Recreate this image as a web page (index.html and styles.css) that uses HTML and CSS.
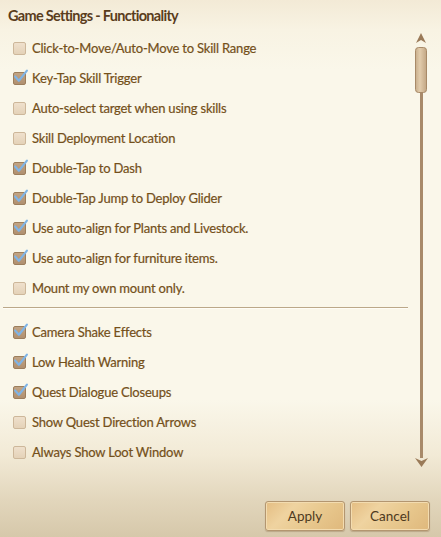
FILE: index.html
```html
<!DOCTYPE html>
<html>
<head>
<meta charset="utf-8">
<link rel="stylesheet" href="styles.css">
</head>
<body>
<div class="window">
  <h1 class="title">Game Settings - Functionality</h1>
  <div class="body">
    <div class="list">
      <div class="row"><span class="box"></span><span class="label">Click-to-Move/Auto-Move to Skill Range</span></div>
      <div class="row"><span class="box on"><svg viewBox="0 0 14 14" class="check"><path d="M2 7 L5.5 11 L13 1.5"/></svg></span><span class="label">Key-Tap Skill Trigger</span></div>
      <div class="row"><span class="box"></span><span class="label">Auto-select target when using skills</span></div>
      <div class="row"><span class="box"></span><span class="label">Skill Deployment Location</span></div>
      <div class="row"><span class="box on"><svg viewBox="0 0 14 14" class="check"><path d="M2 7 L5.5 11 L13 1.5"/></svg></span><span class="label">Double-Tap to Dash</span></div>
      <div class="row"><span class="box on"><svg viewBox="0 0 14 14" class="check"><path d="M2 7 L5.5 11 L13 1.5"/></svg></span><span class="label">Double-Tap Jump to Deploy Glider</span></div>
      <div class="row"><span class="box on"><svg viewBox="0 0 14 14" class="check"><path d="M2 7 L5.5 11 L13 1.5"/></svg></span><span class="label">Use auto-align for Plants and Livestock.</span></div>
      <div class="row"><span class="box on"><svg viewBox="0 0 14 14" class="check"><path d="M2 7 L5.5 11 L13 1.5"/></svg></span><span class="label">Use auto-align for furniture items.</span></div>
      <div class="row"><span class="box"></span><span class="label">Mount my own mount only.</span></div>
      <div class="sep"></div>
      <div class="row"><span class="box on"><svg viewBox="0 0 14 14" class="check"><path d="M2 7 L5.5 11 L13 1.5"/></svg></span><span class="label">Camera Shake Effects</span></div>
      <div class="row"><span class="box on"><svg viewBox="0 0 14 14" class="check"><path d="M2 7 L5.5 11 L13 1.5"/></svg></span><span class="label">Low Health Warning</span></div>
      <div class="row"><span class="box on"><svg viewBox="0 0 14 14" class="check"><path d="M2 7 L5.5 11 L13 1.5"/></svg></span><span class="label">Quest Dialogue Closeups</span></div>
      <div class="row"><span class="box"></span><span class="label">Show Quest Direction Arrows</span></div>
      <div class="row"><span class="box"></span><span class="label">Always Show Loot Window</span></div>
    </div>
    <div class="scrollbar">
      <svg width="20" height="440" viewBox="0 0 20 440">
        <defs>
          <linearGradient id="thumb" x1="0" x2="1" y1="0" y2="0">
            <stop offset="0" stop-color="#c8ae8c"/>
            <stop offset="0.4" stop-color="#e2ccac"/>
            <stop offset="1" stop-color="#c2a684"/>
          </linearGradient>
        </defs>
        <path d="M5 13 L10 3 L15 13 L10 10 Z" fill="#9a7a58"/>
        <rect x="9" y="60" width="3" height="368" fill="#a88a6a"/>
        <rect x="4.5" y="17.5" width="11" height="45" rx="3" fill="url(#thumb)" stroke="#a88a68"/>
        <path d="M4 428 L10.5 437 L17 428 L10.5 431 Z" fill="#9a7a58"/>
      </svg>
    </div>
  </div>
  <div class="footer">
    <button class="btn">Apply</button>
    <button class="btn">Cancel</button>
  </div>
</div>
</body>
</html>
```
FILE: styles.css
```css
html, body {
  margin: 0;
  padding: 0;
}
body {
  width: 441px;
  height: 537px;
  overflow: hidden;
  font-family: Lato, "Open Sans", sans-serif;
}
.window {
  width: 441px;
  height: 537px;
  box-sizing: border-box;
  background: linear-gradient(to bottom, #f3ead6 0px, #f8f3e3 30px, #faf7ea 70px, #faf7ea 400px, #f2ead6 455px, #e2d6bc 500px, #d6c8aa 537px);
  display: flex;
  flex-direction: column;
}
.title {
  margin: 0;
  padding: 5px 0 0 8px;
  height: 22px;
  line-height: 22px;
  font-size: 14.5px;
  letter-spacing: -0.7px;
  font-weight: 700;
  color: #5a3d1c;
}
.body {
  display: flex;
  height: 440px;
  padding-top: 6px;
}
.list {
  width: 405px;
  margin-left: 3px;
}
.row {
  height: 30px;
  display: flex;
  align-items: center;
  padding-left: 10px;
}
.box {
  width: 11px;
  height: 11px;
  border: 1px solid #cdb79a;
  border-radius: 2px;
  background: linear-gradient(#efe0cc, #e4d2b8);
  margin-right: 6px;
  position: relative;
  flex: none;
}
.box.on {
  background: linear-gradient(#c2a484, #b09070);
  border-color: #9c7e5c;
}
.check {
  position: absolute;
  left: -1px;
  top: -4px;
  width: 15px;
  height: 15px;
  overflow: visible;
}
.check path {
  fill: none;
  stroke: #7fb4e6;
  stroke-width: 2;
  stroke-linecap: round;
  stroke-linejoin: round;
}
.label {
  font-size: 13px;
  letter-spacing: -0.2px;
  color: #74501a;
  font-weight: 400;
  -webkit-text-stroke: 0.2px #74501a;
  white-space: nowrap;
  padding-bottom: 1px;
}
.sep {
  height: 1px;
  background: #bba889;
  border-bottom: 1px solid #fffdf6;
  margin: 4px 0 8px 0;
}
.scrollbar {
  width: 20px;
  margin-left: 3px;
  margin-top: -3px;
}
.footer {
  display: flex;
  justify-content: flex-end;
  gap: 5px;
  padding: 28px 11px 0 0;
}
.btn {
  width: 80px;
  height: 30px;
  border: 1px solid #b39670;
  border-radius: 3px;
  background: linear-gradient(135deg, #e4bd82 0%, #efd3a0 30%, #e8c88e 60%, #dfb87c 100%);
  box-shadow: inset 0 0 0 1px #f3dcb0, 0 1px 1px rgba(120, 90, 50, 0.3);
  font-family: Lato, "Open Sans", sans-serif;
  font-size: 13.5px;
  color: #4e3a1e;
  padding: 0;
}
```
